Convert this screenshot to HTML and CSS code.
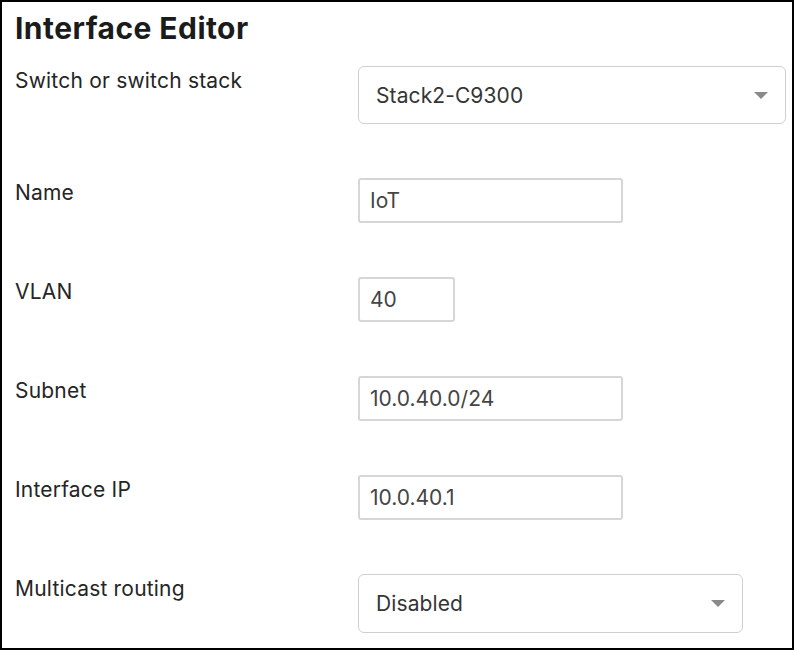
FILE: index.html
```html
<!DOCTYPE html>
<html>
<head>
<meta charset="utf-8">
<link rel="stylesheet" href="styles.css">
</head>
<body>
<div class="frame">
  <h1 class="title">Interface Editor</h1>
  <div class="row row-select-first">
    <div class="label">Switch or switch stack</div>
    <div class="select select-wide"><span>Stack2-C9300</span><span class="caret"></span></div>
  </div>
  <div class="row row-name">
    <div class="label">Name</div>
    <div class="input input-md">IoT</div>
  </div>
  <div class="row">
    <div class="label">VLAN</div>
    <div class="input input-sm">40</div>
  </div>
  <div class="row">
    <div class="label">Subnet</div>
    <div class="input input-md">10.0.40.0/24</div>
  </div>
  <div class="row">
    <div class="label">Interface IP</div>
    <div class="input input-md">10.0.40.1</div>
  </div>
  <div class="row">
    <div class="label">Multicast routing</div>
    <div class="select select-mid"><span>Disabled</span><span class="caret"></span></div>
  </div>
</div>
</body>
</html>
```

FILE: styles.css
```css
html, body {
  margin: 0;
  padding: 0;
  background: #fff;
}
.frame {
  box-sizing: border-box;
  width: 794px;
  height: 650px;
  border: 2px solid #000;
  padding: 0 0 0 13px;
  font-family: Inter, "Noto Sans", sans-serif;
  color: #222;
  overflow: hidden;
}
.title {
  margin: 0;
  padding-top: 8px;
  font-size: 30px;
  line-height: 36px;
  font-weight: 700;
  color: #1b1b1b;
  letter-spacing: 0.45px;
}
.row {
  display: flex;
  align-items: flex-start;
  margin-top: 54px;
}
.row-select-first {
  margin-top: 20px;
}
.label {
  width: 343px;
  font-size: 21px;
  line-height: 25px;
  padding-top: 2px;
  margin-bottom: -1px;
  color: #252525;
  letter-spacing: 0.2px;
}
.input {
  box-sizing: border-box;
  height: 45px;
  border: 2px solid #d6d6d6;
  border-radius: 3px;
  padding: 0 10px;
  font-size: 21px;
  line-height: 41px;
  color: #454545;
}
.input-md { width: 265px; }
.input-sm { width: 97px; }
.row-name { margin-top: 54px; }
.select {
  box-sizing: border-box;
  height: 58px;
  border: 1.5px solid #cfcfcf;
  border-radius: 6px;
  padding: 0 17px 0 17px;
  display: flex;
  align-items: center;
  justify-content: space-between;
  font-size: 21px;
  color: #353535;
  letter-spacing: 0.1px;
}
.select-wide { width: 428px; }
.select-mid { width: 385px; height: 59px; }
.caret {
  width: 0;
  height: 0;
  border-left: 7px solid transparent;
  border-right: 7px solid transparent;
  border-top: 7px solid #8a8a8a;
}
```
